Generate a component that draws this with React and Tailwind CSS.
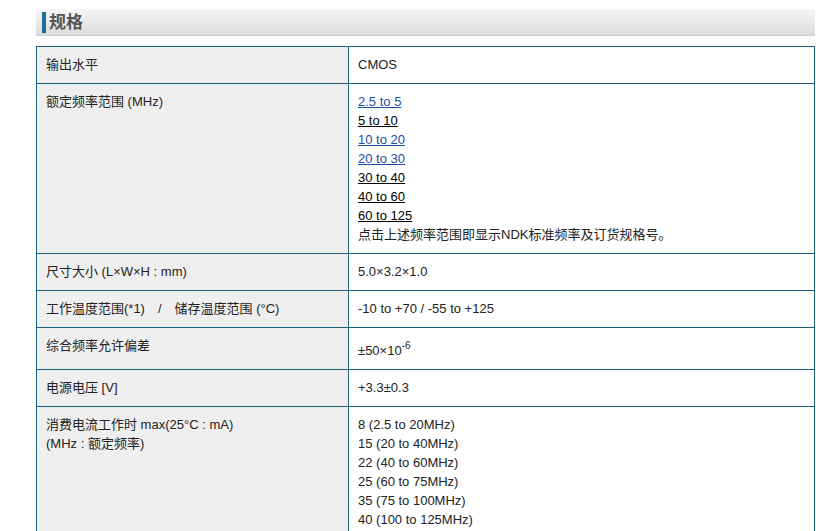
export default function App() {
  const f = { fontFamily: '"Liberation Sans", "Noto Sans CJK SC", sans-serif' };
  const D = ({ children }) => <div className="h-[19px] overflow-visible whitespace-nowrap">{children}</div>;
  const L = ({ children, blue }) => (
    <D><a href="#" className={"underline " + (blue ? "text-[#1a4ea0]" : "text-black")}>{children}</a></D>
  );
  const td = "border border-[#1e5f7f] px-[9px] pt-[8px] pb-[9px] align-top";
  const rows = [
    ["输出水平", <D>CMOS</D>],
    ["额定频率范围 (MHz)", (
      <>
        <L blue>2.5 to 5</L><L>5 to 10</L><L blue>10 to 20</L><L blue>20 to 30</L>
        <L>30 to 40</L><L>40 to 60</L><L>60 to 125</L>
        <D>点击上述频率范围即显示NDK标准频率及订货规格号。</D>
      </>
    )],
    ["尺寸大小 (L×W×H : mm)", <D>5.0×3.2×1.0</D>],
    ["工作温度范围(*1)　/　储存温度范围 (°C)", <D>-10 to +70 / -55 to +125</D>],
    ["综合频率允许偏差", <div className="h-[24px] pt-[5px] whitespace-nowrap leading-[19px]">±50×10<span className="text-[10px] relative -top-[6px]">-6</span></div>],
    ["电源电压 [V]", <D>+3.3±0.3</D>],
    [<><D>消费电流工作时 max(25°C : mA)</D><D>(MHz : 额定频率)</D></>, (
      <>
        <D>8 (2.5 to 20MHz)</D><D>15 (20 to 40MHz)</D><D>22 (40 to 60MHz)</D>
        <D>25 (60 to 75MHz)</D><D>35 (75 to 100MHz)</D><D>40 (100 to 125MHz)</D>
      </>
    )],
  ];
  return (
    <div className="bg-white w-[838px] h-[531px] overflow-hidden text-[13px] leading-[19px] text-[#222]" style={f}>
      <div className="pl-[36px] pr-[23px] pt-[9px]">
        <div className="h-[27px] flex items-center border-b border-[#c8d0d8] bg-gradient-to-b from-[#f6f6f6] to-[#dcdcdc]">
          <div className="w-[4px] h-[21px] bg-[#1e6f96] ml-[6px] mr-[3px]" />
          <span className="text-[17px] font-bold text-[#555]">规格</span>
        </div>
        <table className="mt-[10px] w-full border-collapse">
          <tbody>
            {rows.map((r, i) => (
              <tr key={i}>
                <td className={td + " w-[312px] bg-[#efefef]"}>{typeof r[0] === "string" ? <D>{r[0]}</D> : r[0]}</td>
                <td className={td + " bg-white"}>{r[1]}</td>
              </tr>
            ))}
          </tbody>
        </table>
      </div>
    </div>
  );
}
